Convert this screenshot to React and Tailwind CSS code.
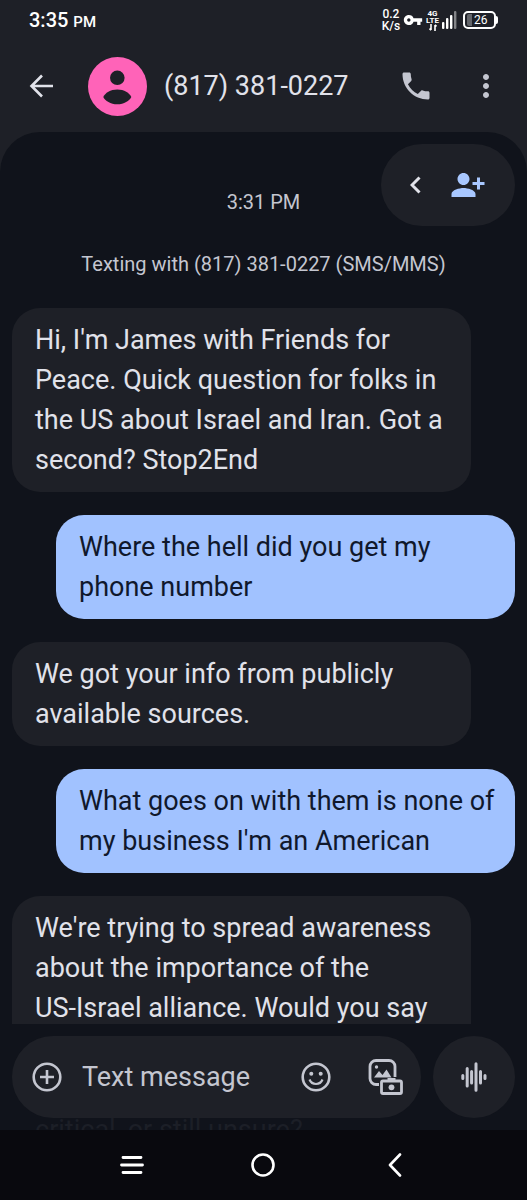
import { MdMoreVert, MdPersonAddAlt1, MdVpnKey } from 'react-icons/md';

const MESSAGES = [
  {
    id: 1,
    text: "Hi, I'm James with Friends for\nPeace. Quick question for folks in\nthe US about Israel and Iran. Got a\nsecond? Stop2End",
  },
  { id: 2, mine: true, text: 'Where the hell did you get my\nphone number' },
  { id: 3, text: 'We got your info from publicly\navailable sources.' },
  {
    id: 4,
    mine: true,
    text: "What goes on with them is none of\nmy business I'm an American",
  },
  {
    id: 5,
    open: true,
    text: "We're trying to spread awareness\nabout the importance of the\nUS-Israel alliance. Would you say",
  },
];

function StatusBar() {
  return (
    <div className="flex h-10 items-center justify-between px-[29px] text-white">
      <div className="text-xl font-medium">
        3:35 <span className="text-[15px]">PM</span>
      </div>
      <div className="flex items-center gap-[3px]">
        <div className="flex flex-col items-center text-[12px] leading-3 font-medium">
          <span>0.2</span>
          <span>K/s</span>
        </div>
        <MdVpnKey className="h-5 w-5" />
        <div className="flex flex-col items-center text-[8px] leading-[7px] font-bold">
          <span>4G</span>
          <span>LTE</span>
          <svg width="8" height="7" viewBox="0 0 8 7" fill="none" stroke="currentColor" strokeWidth="1.6">
            <path d="M2 0v6M0.5 4.5 2 6.3M6 7V1M7.5 2.5 6 0.7" />
          </svg>
        </div>
        <svg width="15" height="18" viewBox="0 0 15 18" fill="currentColor">
          <rect x="0" y="11" width="2.4" height="7" rx="1" />
          <rect x="4" y="7" width="2.4" height="11" rx="1" />
          <rect x="8" y="4" width="2.4" height="14" rx="1" />
          <rect x="12" y="0" width="2.4" height="18" rx="1" opacity="0.45" />
        </svg>
        <div className="flex items-center pl-[3px]">
          <div className="flex h-[18px] w-[33px] items-center rounded-[5px] border-2 border-white pl-[2px]">
            <span className="h-3 w-[5px] rounded-l-[2px] bg-[#63656a]" />
            <span className="pl-[2px] text-[12px] leading-none">26</span>
          </div>
          <span className="h-2 w-[2px] rounded-r-sm bg-white" />
        </div>
      </div>
    </div>
  );
}

function Header() {
  return (
    <header className="flex h-[92px] items-center pr-[23px] pl-[29px]">
      <button type="button" aria-label="Back">
        <svg width="24" height="24" viewBox="0 0 24 24" fill="none" stroke="#e1e2ea" strokeWidth="2.6">
          <path d="M24 12H2.5M13 1.5 2.5 12 13 22.5" />
        </svg>
      </button>
      <svg className="ml-[35px]" width="59" height="59" viewBox="0 0 59 59">
        <circle cx="29.5" cy="29.5" r="29.5" fill="#ff63b8" />
        <circle cx="29.3" cy="20.8" r="7.3" fill="#1e2027" />
        <path d="M15.3 40C17 36 22.5 32.5 29.3 32.5S41.6 36 43.3 40C41.5 43.8 36 47.3 29.3 47.3S17 43.8 15.3 40Z" fill="#1e2027" />
      </svg>
      <h1 className="ml-[17px] flex-1 text-[27px] whitespace-nowrap text-[#e1e2ea]">(817) 381-0227</h1>
      <button type="button" aria-label="Call" className="text-[#c4c6d0]">
        <svg className="h-9 w-9" viewBox="0 0 24 24" fill="currentColor">
          <path d="M6.62 10.79c1.44 2.83 3.76 5.14 6.59 6.59l2.2-2.2c.27-.27.67-.36 1.02-.24 1.12.37 2.33.57 3.57.57.55 0 1 .45 1 1V20c0 .55-.45 1-1 1-9.39 0-17-7.61-17-17 0-.55.45-1 1-1h3.5c.55 0 1 .45 1 1 0 1.25.2 2.45.57 3.57.11.35.03.74-.25 1.02l-2.2 2.2z" />
        </svg>
      </button>
      <button type="button" aria-label="More options" className="ml-[34px] text-[#c4c6d0]">
        <MdMoreVert className="h-9 w-9" />
      </button>
    </header>
  );
}

function Bubble({ text, mine, open }) {
  const side = mine ? 'ml-11 bg-[#a1c2ff] text-[#10182c]' : 'mr-11 bg-[#1e2027] text-[#e1e2ea]';
  const shape = open ? 'rounded-t-[28px]' : 'rounded-[28px]';
  return (
    <li className={`shrink-0 px-[23px] py-3 text-[27px] leading-10 whitespace-pre ${side} ${shape}`}>{text}</li>
  );
}

function Composer() {
  return (
    <footer className="px-3 pt-3">
      <form className="flex gap-3" onSubmit={(e) => e.preventDefault()}>
        <div className="flex h-[82px] min-w-0 flex-1 items-center rounded-full bg-[#1e2027] pr-[18px] pl-5 text-[#c4c6d0]">
          <button type="button" aria-label="Add attachment">
            <svg width="30" height="30" viewBox="0 0 30 30" fill="none" stroke="currentColor" strokeWidth="2.6">
              <circle cx="15" cy="15" r="13.3" />
              <path d="M15 8v14M8 15h14" />
            </svg>
          </button>
          <input
            type="text"
            aria-label="Text message"
            placeholder="Text message"
            className="ml-5 min-w-0 flex-1 bg-transparent text-[27px] placeholder-[#c4c6d0] outline-none"
          />
          <button type="button" aria-label="Emoji">
            <svg width="30" height="30" viewBox="0 0 30 30" fill="none" stroke="currentColor" strokeWidth="2.6">
              <circle cx="15" cy="15" r="13.3" />
              <circle cx="10.3" cy="11.7" r="2" fill="currentColor" stroke="none" />
              <circle cx="19.7" cy="11.7" r="2" fill="currentColor" stroke="none" />
              <path d="M8.5 17.5c1.2 3 3.6 4.5 6.5 4.5s5.3-1.5 6.5-4.5" strokeWidth="2.2" />
            </svg>
          </button>
          <button type="button" aria-label="Gallery" className="ml-[37px]">
            <svg width="35" height="36" viewBox="0 0 35 36" fill="none" stroke="currentColor" strokeWidth="2.8">
              <path d="M11 25.5H8a6 6 0 0 1-6-6V7.5a6 6 0 0 1 6-6h13a6 6 0 0 1 6 6V18" />
              <circle cx="8.5" cy="8" r="1.7" fill="currentColor" stroke="none" />
              <path d="M6 18.5 11 12l3.5 4 4-5.5 5 8Z" fill="currentColor" stroke="none" />
              <rect x="13.5" y="22" width="20" height="12.5" rx="1.5" />
              <path d="M19.5 20.5h8" strokeWidth="3" />
              <circle cx="23.5" cy="28.3" r="2.9" fill="currentColor" stroke="none" />
            </svg>
          </button>
        </div>
        <button
          type="button"
          aria-label="Record voice message"
          className="grid h-[82px] w-[82px] place-items-center rounded-full bg-[#1e2027] text-[#c4c6d0]"
        >
          <svg width="26" height="30" viewBox="0 0 26 30" fill="none" stroke="currentColor" strokeWidth="3" strokeLinecap="round">
            <path d="M1.8 13.5v3M6.2 6.5V24M10.6 9.5V21M15 1.8v26.4M19.5 9.5V21M24 13.5v3" />
          </svg>
        </button>
      </form>
      {/* sliver of the long message showing under the composer */}
      <div aria-hidden="true" className="h-3 overflow-hidden px-[23px] text-[27px] leading-6 whitespace-nowrap text-[#1c1f27]">
        critical, or still unsure?
      </div>
    </footer>
  );
}

function NavBar() {
  return (
    <nav className="grid h-[70px] grid-cols-3 items-center bg-[#09090e] px-[66px] text-white">
      <button type="button" aria-label="Recent apps" className="grid place-items-center">
        <svg width="24" height="20" viewBox="0 0 24 20" fill="none" stroke="currentColor" strokeWidth="2.8" strokeLinecap="round">
          <path d="M3 2.5h18M1.5 10h21M3 17.5h18" />
        </svg>
      </button>
      <button type="button" aria-label="Home" className="grid place-items-center">
        <svg width="24" height="24" viewBox="0 0 24 24" fill="none" stroke="currentColor" strokeWidth="2.6">
          <circle cx="12" cy="12" r="10.5" />
        </svg>
      </button>
      <button type="button" aria-label="Back" className="grid place-items-center">
        <svg width="14" height="24" viewBox="0 0 14 24" fill="none" stroke="currentColor" strokeWidth="2.6" strokeLinecap="round" strokeLinejoin="round">
          <path d="M12 1.5 2 12l10 10.5" />
        </svg>
      </button>
    </nav>
  );
}

export default function App() {
  return (
    <div className="flex h-screen flex-col bg-[#1e2027] font-[Roboto,'Liberation_Sans',sans-serif]">
      <StatusBar />
      <Header />
      <div className="flex min-h-0 flex-1 flex-col rounded-t-[40px] bg-[#10131b]">
        <main className="relative flex min-h-0 flex-1 flex-col overflow-hidden px-3 pt-[55px]">
          <div className="absolute top-3 right-3 flex h-[82px] w-[134px] items-center rounded-full bg-[#1e2027] pl-[29px]">
            <button type="button" aria-label="Expand">
              <svg width="11" height="18" viewBox="0 0 11 18" fill="none" stroke="#e1e2ea" strokeWidth="3">
                <path d="M9.5 1.5 2 9l7.5 7.5" />
              </svg>
            </button>
            <button type="button" aria-label="Add contact" className="ml-[29px] text-[#a8c7ff]">
              <MdPersonAddAlt1 className="h-9 w-9" />
            </button>
          </div>
          <p className="text-center text-xl leading-[30px] text-[#c4c6d0]">3:31 PM</p>
          <p className="mt-8 text-center text-xl leading-[30px] text-[#c4c6d0]">
            Texting with (817) 381-0227 (SMS/MMS)
          </p>
          <ul className="mt-[29px] flex min-h-0 flex-col gap-[23px]">
            {MESSAGES.map((m) => (
              <Bubble key={m.id} {...m} />
            ))}
          </ul>
        </main>
        <Composer />
      </div>
      <NavBar />
    </div>
  );
}
